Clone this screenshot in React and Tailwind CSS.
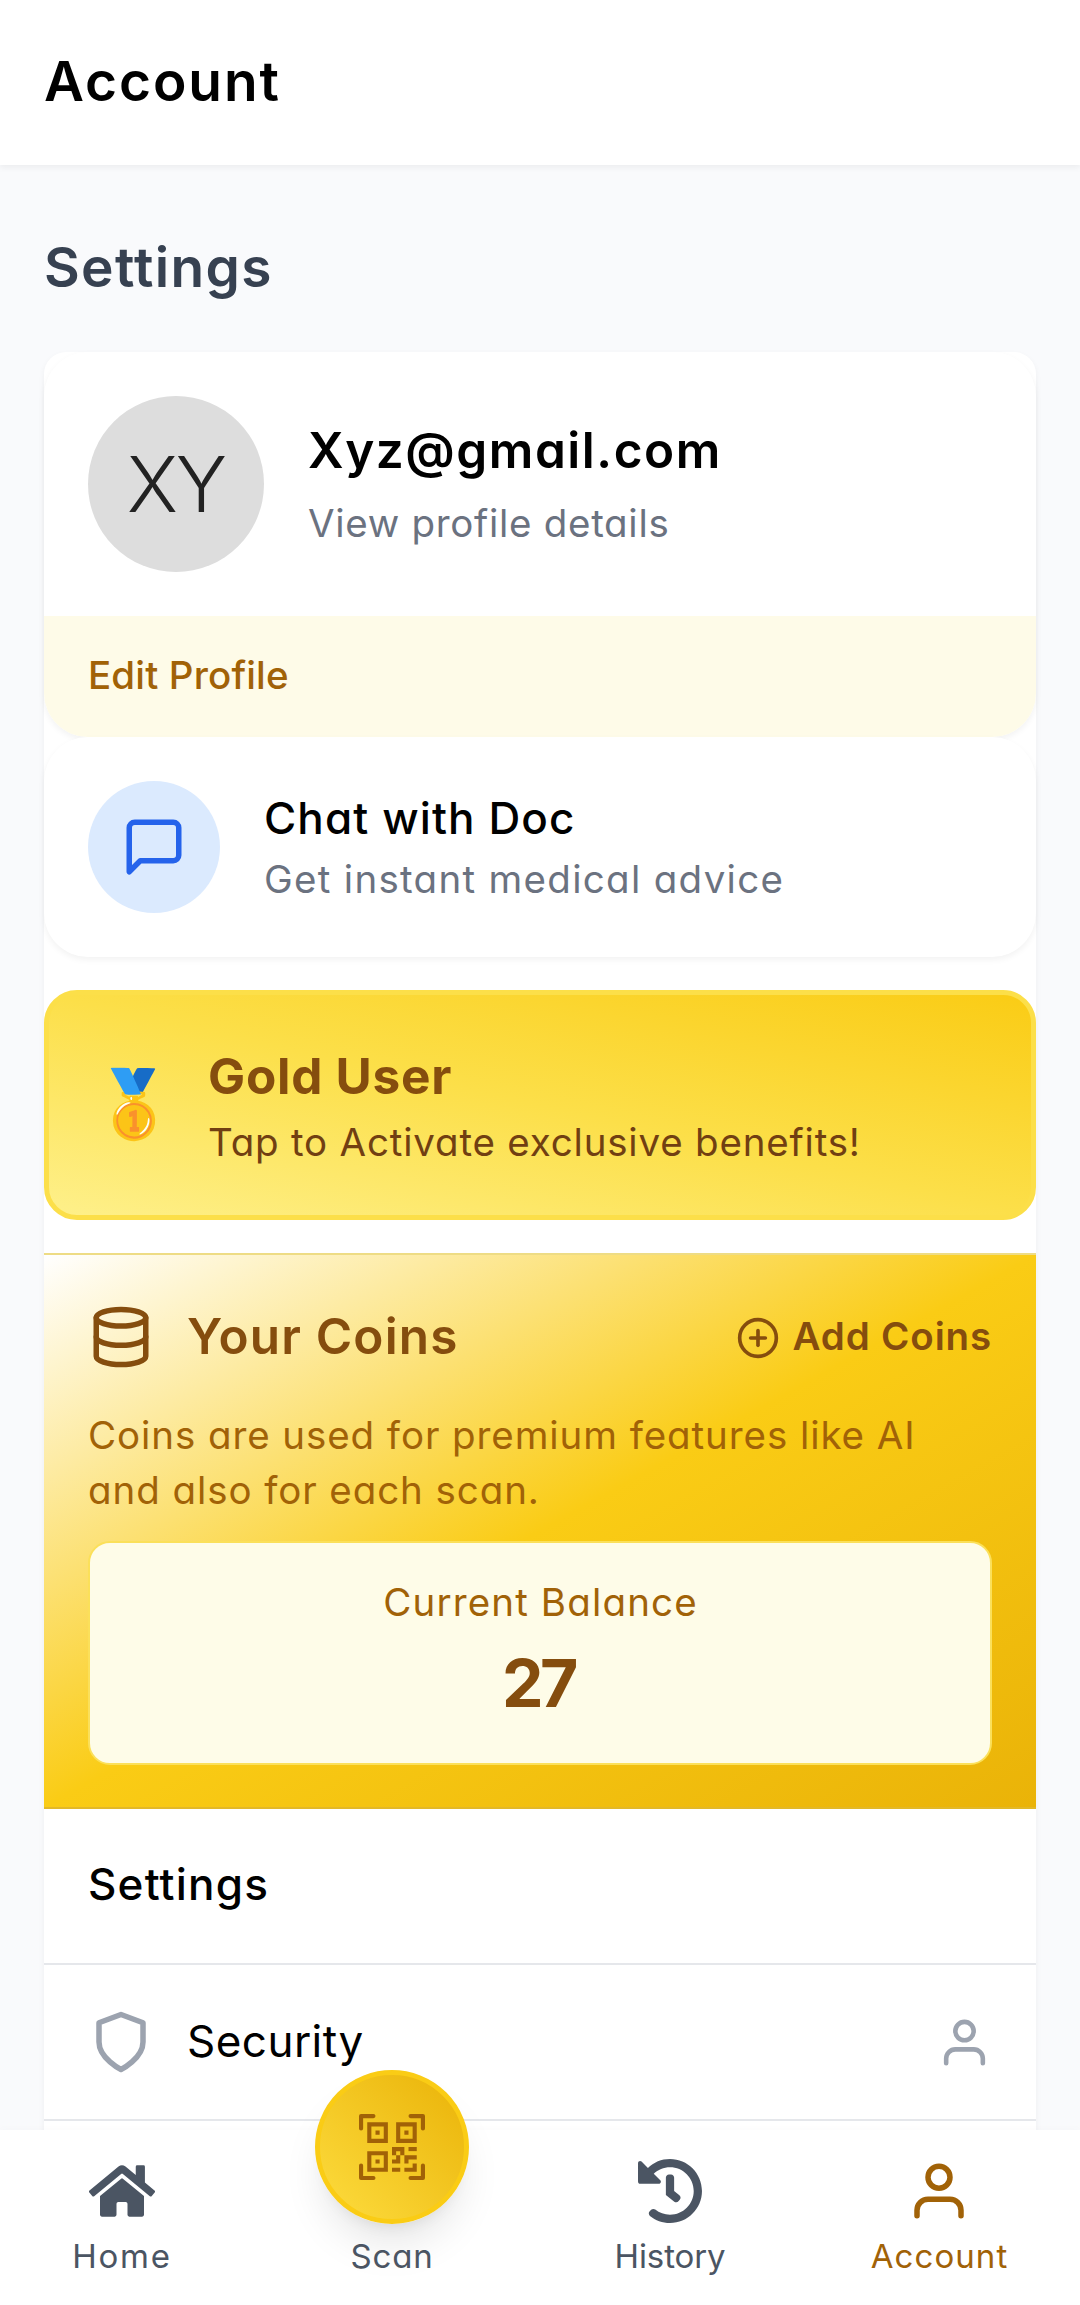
import React from "react";
import { FaHistory, FaHome } from "react-icons/fa";
import { BsQrCodeScan } from "react-icons/bs";
import { FiDatabase, FiMessageSquare, FiPlusCircle, FiShield, FiUser } from "react-icons/fi";

function Header() {
  return (
    <header className="relative z-10 flex h-[165px] shrink-0 items-center bg-white px-11 pb-[3px] shadow-[0_3px_6px_rgba(0,0,0,0.05)]">
      <h1 className="text-[55px] leading-[77px] font-semibold tracking-[1.9px]">Account</h1>
    </header>
  );
}

function ProfileCard() {
  return (
    <section className="overflow-hidden rounded-[44px] bg-white shadow-[0_3px_6px_rgba(0,0,0,0.05)]">
      <div className="flex h-[264px] items-start gap-11 p-11">
        <div className="flex size-44 items-center justify-center rounded-full bg-[#dddddd] text-[77px] leading-none font-light tracking-[-2px] text-[#222222]">
          XY
        </div>
        <div className="mt-4">
          <p className="text-[49.5px] leading-[77px] font-semibold tracking-[1.53px]">Xyz@gmail.com</p>
          <p className="mt-[7px] text-[38.5px] leading-[55px] tracking-[0.7px] text-[#6b7280]">View profile details</p>
        </div>
      </div>
      <div className="flex h-[121px] items-center bg-[#fefbe8] px-11 pb-[2px] text-[38.5px] font-medium tracking-[0.15px] text-[#a16207]">
        Edit Profile
      </div>
    </section>
  );
}

function ChatCard() {
  return (
    <section className="flex h-[220px] items-start gap-11 rounded-[44px] bg-white p-11 shadow-[0_3px_6px_rgba(0,0,0,0.05)]">
      <div className="flex size-[132px] items-center justify-center rounded-full bg-[#dbeafe]">
        <FiMessageSquare className="size-[66px] text-[#2563eb]" />
      </div>
      <div className="mt-1">
        <p className="text-[44px] leading-[66px] font-medium tracking-[1.1px]">Chat with Doc</p>
        <p className="mt-px text-[38.5px] leading-[55px] tracking-[1.3px] text-[#6b7280]">Get instant medical advice</p>
      </div>
    </section>
  );
}

function GoldCard() {
  return (
    <section className="my-[33px] flex h-[230px] items-center rounded-[33px] border-[5px] border-[#fcdf49] bg-[linear-gradient(to_top_right,#fef08a,#fcdf49,#facc15)] px-11">
      <span className="w-[82px] text-center font-['Noto_Color_Emoji',sans-serif] text-[66px] leading-[88px]">🥇</span>
      <div className="ml-[33px] pb-[2px]">
        <p className="text-[49.5px] leading-[77px] font-bold tracking-[0.75px] text-[#854d0e]">Gold User</p>
        <p className="text-[38.5px] leading-[55px] tracking-[0.81px] text-[#713f12]">Tap to Activate exclusive benefits!</p>
      </div>
    </section>
  );
}

function CoinsPanel() {
  return (
    <section className="h-[556px] border-y-2 border-t-[#eedc85] border-b-[#e2b828] bg-[linear-gradient(to_bottom_right,#ffffff,#facc15,#eab308)] px-11 pt-11">
      <div className="flex h-[77px] items-center text-[#854d0e]">
        <FiDatabase className="mb-px size-[66px]" />
        <h3 className="ml-[33px] pb-[2px] text-[49.5px] leading-[77px] font-semibold tracking-[1.15px]">Your Coins</h3>
        <button className="ml-auto flex items-center gap-3 text-[38.5px] leading-[55px] font-semibold tracking-[0.86px]">
          <FiPlusCircle className="size-11" />
          <span className="pb-[2px]">Add Coins</span>
        </button>
      </div>
      <p className="mt-8 text-[38.5px] leading-[55px] tracking-[0.92px] text-[#a16207]">
        Coins are used for premium features like AI
        <br />
        and also for each scan.
      </p>
      <div className="mt-[23px] flex h-[224px] flex-col items-center rounded-[22px] border-2 border-[#fbe05a] bg-[#fefce8] pt-8">
        <p className="pl-px text-[38.5px] leading-[55px] tracking-[1.15px] text-[#a16207]">Current Balance</p>
        <p className="mt-[9px] pr-[3px] text-[66px] leading-[88px] font-bold tracking-[-3.6px] text-[#854d0e]">27</p>
      </div>
    </section>
  );
}

function NavItem({ width, icon, label, color }) {
  return (
    <a className={`flex flex-col items-center ${width} ${color}`}>
      {icon}
      {label}
    </a>
  );
}

function BottomNav() {
  return (
    <nav className="relative z-10 flex h-[175px] shrink-0 bg-white shadow-[0_-3px_6px_rgba(0,0,0,0.01)]">
      <NavItem
        width="w-[243px]"
        color="text-[#4b5563]"
        icon={<FaHome className="mt-7 size-[66px]" />}
        label={<span className="mt-[10px] pl-px text-[33px] leading-[44px] tracking-[1.8px]">Home</span>}
      />
      <NavItem
        width="w-[298px]"
        color="text-[#4b5563]"
        icon={
          <span className="-mt-[60px] flex size-[154px] shrink-0 items-center justify-center rounded-full border-[5px] border-[#facc15] bg-[linear-gradient(to_top_right,#fddc3e,#eab308)] shadow-[0_27px_41px_-8px_rgba(0,0,0,0.1),0_11px_16px_-11px_rgba(0,0,0,0.1)]">
            <BsQrCodeScan className="size-[66px] text-[#a16207]" />
          </span>
        }
        label={<span className="mt-[10px] text-[33px] leading-[44px] tracking-[0.86px]">Scan</span>}
      />
      <NavItem
        width="w-[258px]"
        color="text-[#4b5563]"
        icon={<FaHistory className="mt-7 size-[66px]" />}
        label={<span className="mt-[10px] text-[33px] leading-[44px] tracking-[-0.1px]">History</span>}
      />
      <NavItem
        width="w-[280px]"
        color="text-[#a16207]"
        icon={<FiUser className="mt-7 size-[66px]" />}
        label={<span className="mt-[10px] pl-px text-[33px] leading-[44px] tracking-[1.07px]">Account</span>}
      />
    </nav>
  );
}

export default function App() {
  return (
    <div className="flex h-[2305px] w-[1080px] flex-col overflow-hidden bg-[#f9fafc] font-['Inter','Liberation_Sans',sans-serif] whitespace-nowrap text-black [font-feature-settings:'cv11']">
      <Header />
      <main className="min-h-0 flex-1 overflow-hidden px-11">
        <h2 className="mt-[64px] text-[55px] leading-[77px] font-semibold tracking-[1.35px] text-[#374151]">Settings</h2>
        <div className="mt-[46px] h-[1900px] rounded-[22px] bg-white shadow-[0_3px_6px_rgba(0,0,0,0.05)]">
          <ProfileCard />
          <ChatCard />
          <GoldCard />
          <CoinsPanel />
          <div className="flex h-[156px] items-center border-b-2 border-[#e5e7eb] px-11 pb-1 text-[44px] font-medium tracking-[1.2px]">
            Settings
          </div>
          <div className="flex h-[156px] items-center border-b-2 border-[#e5e7eb] px-11">
            <FiShield className="size-[66px] text-[#9ca3af]" />
            <span className="ml-[33px] pb-[3px] text-[44px] tracking-[0.46px]">Security</span>
            <FiUser className="ml-auto size-[55px] text-[#9ca3af]" />
          </div>
        </div>
      </main>
      <BottomNav />
    </div>
  );
}
